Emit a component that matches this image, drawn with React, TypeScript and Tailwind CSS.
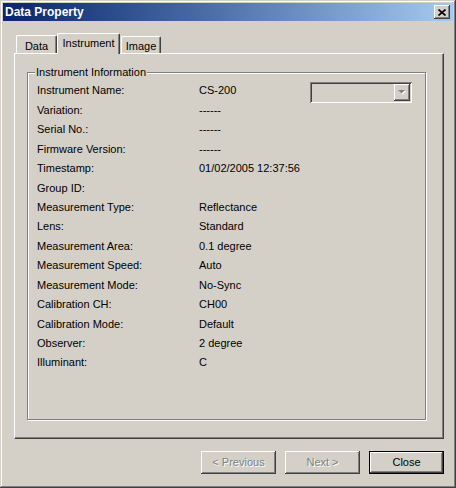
import React from 'react'

const rows: Array<[string, string]> = [
  ['Instrument Name:', 'CS-200'],
  ['Variation:', '------'],
  ['Serial No.:', '------'],
  ['Firmware Version:', '------'],
  ['Timestamp:', '01/02/2005 12:37:56'],
  ['Group ID:', ''],
  ['Measurement Type:', 'Reflectance'],
  ['Lens:', 'Standard'],
  ['Measurement Area:', '0.1 degree'],
  ['Measurement Speed:', 'Auto'],
  ['Measurement Mode:', 'No-Sync'],
  ['Calibration CH:', 'CH00'],
  ['Calibration Mode:', 'Default'],
  ['Observer:', '2 degree'],
  ['Illuminant:', 'C'],
]

const raised = 'shadow-[inset_-1px_-1px_#404040,inset_1px_1px_#ffffff,inset_-2px_-2px_#808080,inset_2px_2px_#d4d0c8]'

const ComboBox = () => (
  <div className="w-[102px] h-[21px] mt-[4px] shrink-0 flex bg-[#d4d0c8] p-[2px] shadow-[inset_1px_1px_#808080,inset_-1px_-1px_#ffffff,inset_2px_2px_#404040,inset_-2px_-2px_#d4d0c8]">
    <div className="flex-1" />
    <div className={`w-[16px] h-[17px] flex items-center justify-center bg-[#d4d0c8] ${raised}`}>
      <svg width="8" height="5" viewBox="0 0 8 5">
        <path d="M1 1h7L4.5 4.5z" fill="#ffffff" />
        <path d="M0 0h7L3.5 3.5z" fill="#808080" />
      </svg>
    </div>
  </div>
)

const DlgButton = ({ label, disabled, isDefault }: { label: string; disabled?: boolean; isDefault?: boolean }) => (
  <button
    className={`w-[75px] h-[23px] text-[11px] bg-[#d4d0c8] ${
      isDefault
        ? 'shadow-[inset_0_0_0_1px_#000000,inset_-2px_-2px_#404040,inset_2px_2px_#ffffff,inset_-3px_-3px_#808080]'
        : raised
    } ${disabled ? 'text-[#808080] [text-shadow:1px_1px_#ffffff]' : 'text-black'}`}
  >
    {label}
  </button>
)

export default function App() {
  return (
    <div className="w-[456px] h-[488px] bg-[#d4d0c8] p-[3px] font-['Liberation_Sans',Arial,sans-serif] shadow-[inset_-1px_-1px_#404040,inset_1px_1px_#d4d0c8,inset_-2px_-2px_#808080,inset_2px_2px_#ffffff]">
      {/* title bar */}
      <div className="h-[18px] flex items-center justify-between pl-[2px] pr-[3px] bg-gradient-to-r from-[#0a246a] to-[#a6caf0]">
        <span className="text-white font-bold text-[12px] leading-none">Data Property</span>
        <div className={`w-[16px] h-[14px] flex items-center justify-center bg-[#d4d0c8] ${raised}`}>
          <svg width="8" height="7" viewBox="0 0 8 7">
            <path d="M0.5 0.5L7.5 6.5M7.5 0.5L0.5 6.5" stroke="#000" strokeWidth="1.6" />
          </svg>
        </div>
      </div>

      <div className="pl-[11px] pt-[12px]">
        {/* tabs */}
        <div className="flex items-end h-[20px] pl-[2px]">
          <div className="w-[41px] h-[18px] pt-[2px] text-center text-[11px] text-black border-l border-t border-white rounded-tl-[2px] rounded-tr-[2px] border-r border-r-[#404040] shadow-[inset_-1px_0_#808080]">
            Data
          </div>
          <div className="relative z-10 w-[63px] h-[21px] -mb-[1px] pt-[1px] text-center text-[11px] text-black bg-[#d4d0c8] border-l border-t border-white rounded-tl-[2px] rounded-tr-[2px] border-r border-r-[#404040] shadow-[inset_-1px_0_#808080]">
            Instrument
          </div>
          <div className="ml-[1px] w-[40px] h-[17px] pt-[1px] text-center text-[11px] text-black border-l border-t border-white rounded-tl-[2px] rounded-tr-[2px] border-r border-r-[#404040] shadow-[inset_-1px_0_#808080]">
            Image
          </div>
        </div>

        {/* panel */}
        <div className="w-[430px] h-[386px] border-l border-t border-white border-r border-b border-r-[#404040] border-b-[#404040] shadow-[inset_-1px_-1px_#808080] pl-[12px] pt-[18px]">
          <div className="relative w-[399px] h-[348px] border border-[#808080] shadow-[1px_1px_#ffffff,inset_1px_1px_#ffffff]">
            <span className="absolute left-[7px] -top-[8px] px-[1px] bg-[#d4d0c8] text-[11px] text-black leading-[14px]">
              Instrument Information
            </span>
            <div className="pt-[8px] pl-[9px] pr-[13px]">
              {rows.map(([label, value], i) => (
                <div key={label} className="flex items-center h-[19.43px] text-[11px] text-black">
                  <span className="w-[162px] shrink-0">{label}</span>
                  <span className="flex-1">{value}</span>
                  {i === 0 && <ComboBox />}
                </div>
              ))}
            </div>
          </div>
        </div>

        {/* buttons */}
        <div className="w-[430px] flex justify-end gap-[9px] mt-[12px]">
          <DlgButton label="< Previous" disabled />
          <DlgButton label="Next >" disabled />
          <DlgButton label="Close" isDefault />
        </div>
      </div>
    </div>
  )
}
